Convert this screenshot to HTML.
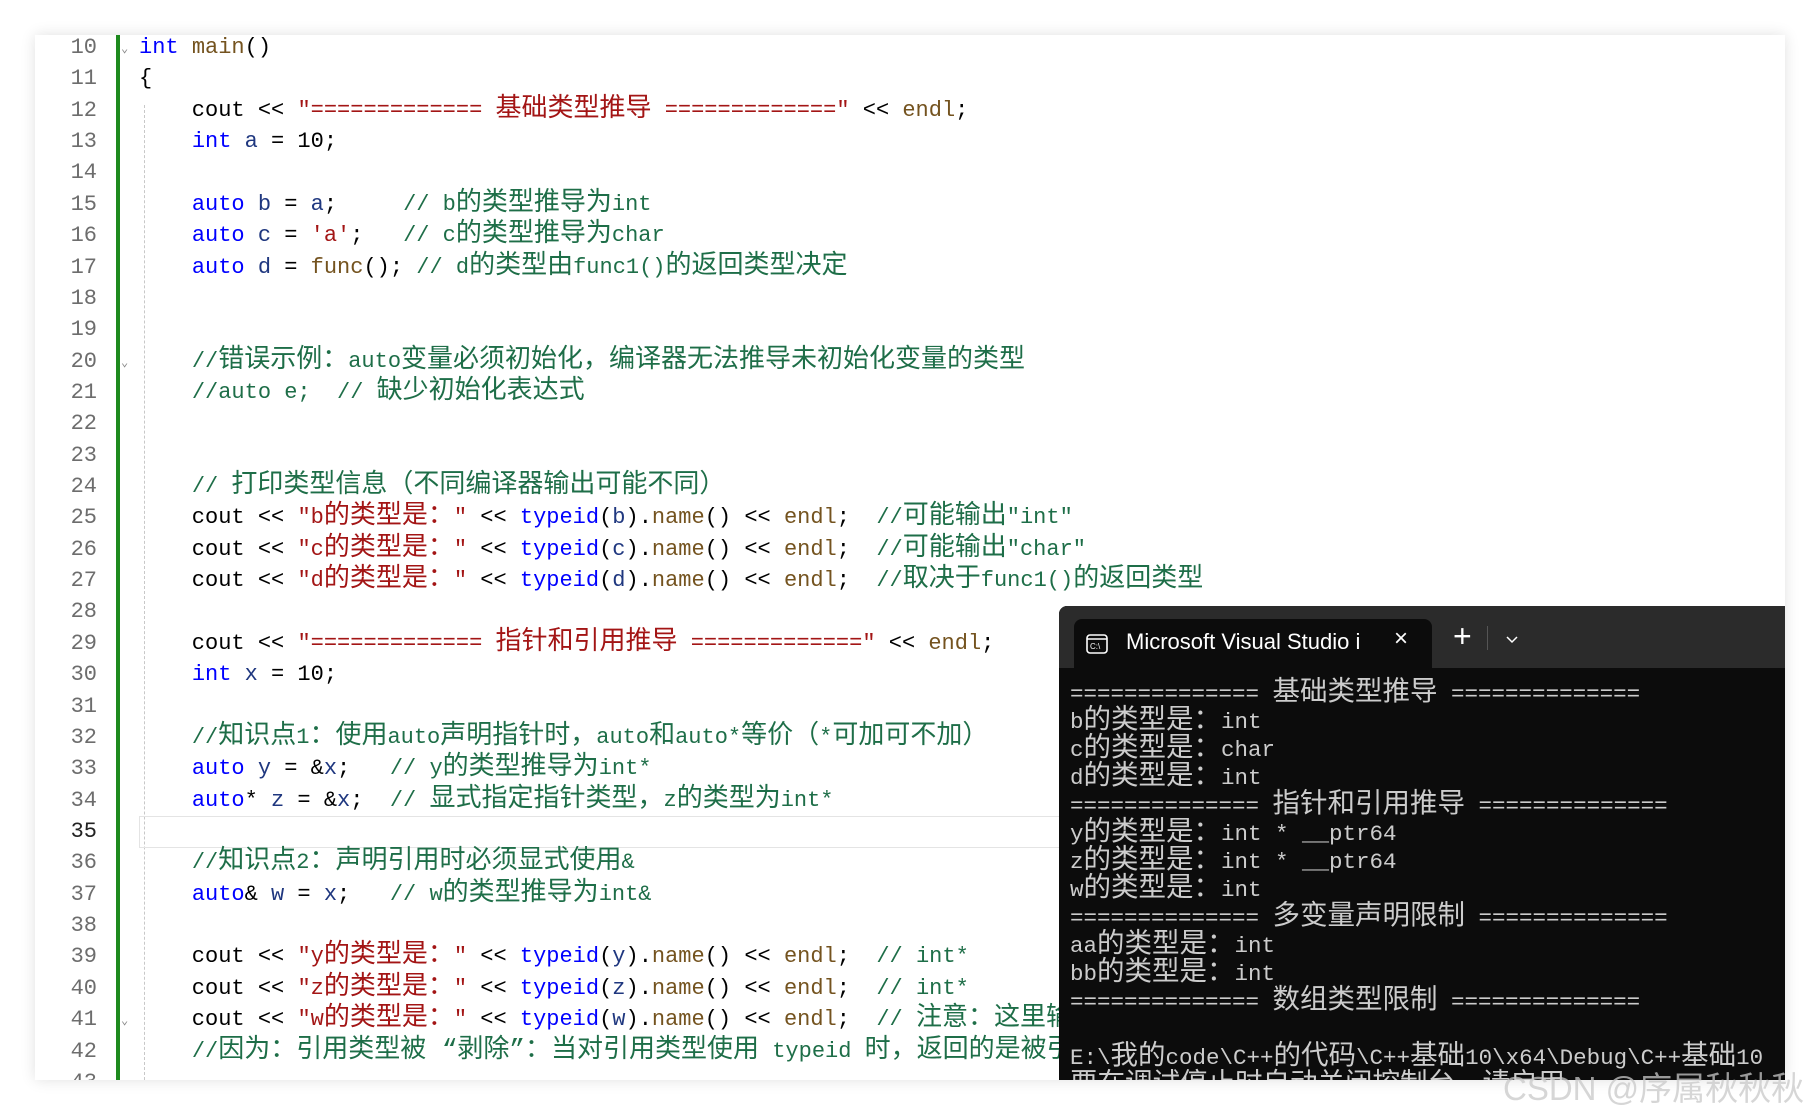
<!DOCTYPE html>
<html><head><meta charset="utf-8"><style>
body{margin:0;width:1820px;height:1114px;background:#fff;position:relative;overflow:hidden;font-family:"Liberation Mono","Noto Sans CJK SC",monospace}
#panel{position:absolute;left:35px;top:35px;width:1750px;height:1045px;background:#fff;box-shadow:0 0 14px rgba(0,0,0,.12);overflow:hidden}
#bar{position:absolute;left:81px;top:0;width:4px;height:1045px;background:#1e8a1e}
#guide{position:absolute;left:109px;top:70px;height:980px;border-left:1px dashed #c8c8c8}
#nums{position:absolute;left:0;top:-3px;width:62px;text-align:right;color:#6d6d6d;font-size:22px;line-height:31.36px}
#code{position:absolute;left:104px;top:-3px;font-size:22px;line-height:31.36px;white-space:pre;color:#000}
#cur{position:absolute;left:104px;top:781px;width:1000px;height:30px;border:1px solid #e4e4e4;border-right:none}
.k{color:#0000ff}.s{color:#a31515}.c{color:#1e6e48}.f{color:#74531f}.v{color:#1f377f}
i{font-style:normal;font-size:26px;line-height:0}
.fold{position:absolute;left:86px;color:#888;font-size:12px}
#term{position:absolute;left:1059px;top:606px;width:726px;height:474px;background:#0c0c0c;overflow:hidden;border-radius:8px 0 0 0;z-index:5}
#tb{position:absolute;left:0;top:0;width:726px;height:62px;background:#2b2b2b}
#tab{position:absolute;left:15px;top:13px;width:358px;height:49px;background:#0c0c0c;border-radius:8px 8px 0 0}
#tt{position:absolute;left:52px;top:10px;color:#fff;font-family:"Liberation Sans",sans-serif;font-size:22px;white-space:nowrap}
#out{position:absolute;left:11px;top:74px;color:#cccccc;font-size:22.5px;line-height:28px;white-space:pre}
#out i{font-size:27.5px}
#wm{position:absolute;left:1503px;top:1062px;font-family:"Liberation Sans","Noto Sans CJK SC",sans-serif;font-size:33px;color:rgba(200,200,200,.75);z-index:9;white-space:nowrap}
</style></head><body>
<div id="panel">
<div id="bar"></div><div id="guide"></div>
<div id="cur"></div>
<span class="fold" style="top:6px">⌄</span><span class="fold" style="top:320px">⌄</span><span class="fold" style="top:978px">⌄</span>
<div id="nums">10<br>11<br>12<br>13<br>14<br>15<br>16<br>17<br>18<br>19<br>20<br>21<br>22<br>23<br>24<br>25<br>26<br>27<br>28<br>29<br>30<br>31<br>32<br>33<br>34<br><span style="color:#222">35</span><br>36<br>37<br>38<br>39<br>40<br>41<br>42<br>43</div>
<div id="code"><span class="k">int</span> <span class="f">main</span>()
{
    cout &lt;&lt; <span class="s">"============= <i>基础类型推导</i> ============="</span> &lt;&lt; <span class="f">endl</span>;
    <span class="k">int</span> <span class="v">a</span> = 10;

    <span class="k">auto</span> <span class="v">b</span> = <span class="v">a</span>;     <span class="c">// b<i>的类型推导为</i>int</span>
    <span class="k">auto</span> <span class="v">c</span> = <span class="s">'a'</span>;   <span class="c">// c<i>的类型推导为</i>char</span>
    <span class="k">auto</span> <span class="v">d</span> = <span class="f">func</span>(); <span class="c">// d<i>的类型由</i>func1()<i>的返回类型决定</i></span>


    <span class="c">//<i>错误示例：</i>auto<i>变量必须初始化，编译器无法推导未初始化变量的类型</i></span>
    <span class="c">//auto e;  // <i>缺少初始化表达式</i></span>


    <span class="c">// <i>打印类型信息（不同编译器输出可能不同）</i></span>
    cout &lt;&lt; <span class="s">"b<i>的类型是：</i>"</span> &lt;&lt; <span class="k">typeid</span>(<span class="v">b</span>).<span class="f">name</span>() &lt;&lt; <span class="f">endl</span>;  <span class="c">//<i>可能输出</i>"int"</span>
    cout &lt;&lt; <span class="s">"c<i>的类型是：</i>"</span> &lt;&lt; <span class="k">typeid</span>(<span class="v">c</span>).<span class="f">name</span>() &lt;&lt; <span class="f">endl</span>;  <span class="c">//<i>可能输出</i>"char"</span>
    cout &lt;&lt; <span class="s">"d<i>的类型是：</i>"</span> &lt;&lt; <span class="k">typeid</span>(<span class="v">d</span>).<span class="f">name</span>() &lt;&lt; <span class="f">endl</span>;  <span class="c">//<i>取决于</i>func1()<i>的返回类型</i></span>

    cout &lt;&lt; <span class="s">"============= <i>指针和引用推导</i> ============="</span> &lt;&lt; <span class="f">endl</span>;
    <span class="k">int</span> <span class="v">x</span> = 10;

    <span class="c">//<i>知识点</i>1<i>：使用</i>auto<i>声明指针时，</i>auto<i>和</i>auto*<i>等价（</i>*<i>可加可不加）</i></span>
    <span class="k">auto</span> <span class="v">y</span> = &amp;<span class="v">x</span>;   <span class="c">// y<i>的类型推导为</i>int*</span>
    <span class="k">auto</span>* <span class="v">z</span> = &amp;<span class="v">x</span>;  <span class="c">// <i>显式指定指针类型，</i>z<i>的类型为</i>int*</span>

    <span class="c">//<i>知识点</i>2<i>：声明引用时必须显式使用</i>&amp;</span>
    <span class="k">auto</span>&amp; <span class="v">w</span> = <span class="v">x</span>;   <span class="c">// w<i>的类型推导为</i>int&amp;</span>

    cout &lt;&lt; <span class="s">"y<i>的类型是：</i>"</span> &lt;&lt; <span class="k">typeid</span>(<span class="v">y</span>).<span class="f">name</span>() &lt;&lt; <span class="f">endl</span>;  <span class="c">// int*</span>
    cout &lt;&lt; <span class="s">"z<i>的类型是：</i>"</span> &lt;&lt; <span class="k">typeid</span>(<span class="v">z</span>).<span class="f">name</span>() &lt;&lt; <span class="f">endl</span>;  <span class="c">// int*</span>
    cout &lt;&lt; <span class="s">"w<i>的类型是：</i>"</span> &lt;&lt; <span class="k">typeid</span>(<span class="v">w</span>).<span class="f">name</span>() &lt;&lt; <span class="f">endl</span>;  <span class="c">// <i>注意：这里输出</i>int<i>而非</i>int&amp;</span>
    <span class="c">//<i>因为：引用类型被 “剥除”：当对引用类型使用</i> typeid <i>时，返回的是被引用类型</i></span>
</div>
</div>
<div id="term">
<div id="tb"><div id="tab">
<svg style="position:absolute;left:12px;top:15px" width="22" height="20" viewBox="0 0 22 20"><rect x="1" y="1" width="20" height="18" rx="3" fill="none" stroke="#fff" stroke-width="1.6"/><line x1="1" y1="5" x2="21" y2="5" stroke="#fff" stroke-width="1.4"/><text x="4" y="15" fill="#fff" font-size="8" font-family="Liberation Sans">C:\</text></svg>
<div id="tt">Microsoft Visual Studio i</div>
<div style="position:absolute;left:320px;top:6px;color:#fff;font-size:24px;font-family:'Liberation Sans'">×</div>
</div>
<div style="position:absolute;left:394px;top:12px;color:#fff;font-size:32px;font-family:'Liberation Sans';font-weight:300">+</div>
<div style="position:absolute;left:428px;top:20px;width:1px;height:24px;background:#555"></div>
<svg style="position:absolute;left:446px;top:29px" width="14" height="10"><path d="M2 2 L7 7 L12 2" stroke="#fff" stroke-width="1.5" fill="none"/></svg>
</div>
<div id="out">============== <i>基础类型推导</i> ==============
b<i>的类型是：</i>int
c<i>的类型是：</i>char
d<i>的类型是：</i>int
============== <i>指针和引用推导</i> ==============
y<i>的类型是：</i>int * __ptr64
z<i>的类型是：</i>int * __ptr64
w<i>的类型是：</i>int
============== <i>多变量声明限制</i> ==============
aa<i>的类型是：</i>int
bb<i>的类型是：</i>int
============== <i>数组类型限制</i> ==============

E:\<i>我的</i>code\C++<i>的代码</i>\C++<i>基础</i>10\x64\Debug\C++<i>基础</i>10
<i>要在调试停止时自动关闭控制台，请启用</i></div>
</div>
<div id="wm">CSDN @序属秋秋秋</div>
</body></html>
